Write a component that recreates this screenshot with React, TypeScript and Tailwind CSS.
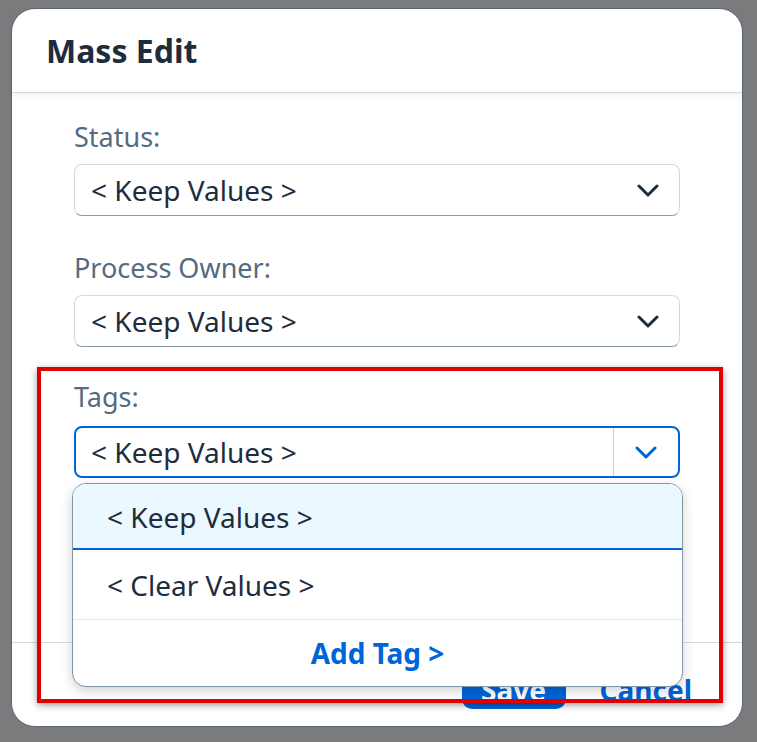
import React from "react";

const Chevron = ({ className }: { className?: string }) => (
  <svg width="22" height="13" viewBox="0 0 22 13" fill="none" className={className}>
    <polyline
      points="2,2 11,11 20,2"
      stroke="currentColor"
      strokeWidth="3"
      strokeLinecap="round"
      strokeLinejoin="round"
    />
  </svg>
);

const SelectField = ({ label, value }: { label: string; value: string }) => (
  <div className="flex flex-col">
    <div className="h-[42px] text-[27px] leading-[30px] text-[#556b82]">{label}</div>
    <div className="flex h-[52px] items-center justify-between rounded-[8px] border border-[#d3d9de] border-b-[#8899ab] bg-white pl-[16px] pr-[20px]">
      <span className="text-[28px] text-[#1d2d3e]">{value}</span>
      <Chevron className="text-[#1d2d3e]" />
    </div>
  </div>
);

/**
 * Mass Edit dialog with the Tags combo box opened.
 * The red frame is an annotation drawn over the Tags field and its list.
 */
export default function App() {
  return (
    <div
      className="h-[742px] w-[757px] overflow-hidden bg-[#7a7b7d] pl-[11px] pt-[8px]"
      style={{ fontFamily: '"Noto Sans", sans-serif' }}
    >
      <div className="flex h-[719px] w-[732px] flex-col rounded-[24px] border border-[#5e6671] bg-white">
        {/* header */}
        <div className="relative z-10 flex h-[84px] shrink-0 items-center border-b border-[#d9d9d9] pl-[34px] shadow-[0_3px_6px_rgba(0,0,0,0.05)]">
          <h1 className="text-[32px] font-bold text-[#1d2d3e]">Mass Edit</h1>
        </div>

        {/* body */}
        <div className="flex flex-1 flex-col gap-[37px] px-[62px] pt-[29px]">
          <SelectField label="Status:" value="< Keep Values >" />
          <SelectField label="Process Owner:" value="< Keep Values >" />

          <div className="relative z-20 -mt-[2px] flex flex-col">
            <div className="h-[44px] text-[27px] leading-[30px] text-[#556b82]">Tags:</div>
            <div className="flex h-[52px] items-stretch rounded-[8px] border-2 border-[#0064d9] bg-white">
              <div className="flex flex-1 items-center pl-[15px]">
                <span className="text-[28px] text-[#1d2d3e]">{"< Keep Values >"}</span>
              </div>
              <div className="flex w-[65px] items-center justify-center border-l border-[#a9d0ff]">
                <Chevron className="text-[#0064d9]" />
              </div>
            </div>

            {/* open list */}
            <div className="absolute left-[-2px] top-[101px] w-[611px] overflow-hidden rounded-[14px] border border-[#8396a8] bg-white shadow-[0_4px_12px_rgba(0,0,0,0.18)]">
              <div className="flex h-[66px] items-center border-b-2 border-[#0064d9] bg-[#ebf8ff] pl-[34px] pt-[2px] text-[28px] text-[#1d2d3e]">
                {"< Keep Values >"}
              </div>
              <div className="flex h-[70px] items-center border-b border-[#e5e5e5] pl-[34px] text-[28px] text-[#1d2d3e]">
                {"< Clear Values >"}
              </div>
              <div className="flex h-[66px] items-center justify-center text-[28px] font-bold text-[#0064d9]">
                {"Add Tag >"}
              </div>
            </div>

            {/* annotation frame */}
            <div className="pointer-events-none absolute left-[-37px] top-[-15px] h-[336px] w-[686px] border-[4px] border-[#e10000] shadow-[0_2px_7px_rgba(0,0,0,0.4)]" />
          </div>
        </div>

        {/* footer */}
        <div className="flex h-[84px] shrink-0 items-start justify-end gap-[20px] border-t border-[#d9d9d9] pr-[36px] pt-[28px]">
          <button className="h-[38px] w-[104px] rounded-[10px] bg-[#0064d9] text-[28px] font-bold leading-[38px] text-white">
            Save
          </button>
          <button className="h-[38px] px-[14px] text-[28px] font-bold leading-[38px] text-[#0064d9]">
            Cancel
          </button>
        </div>
      </div>
    </div>
  );
}
